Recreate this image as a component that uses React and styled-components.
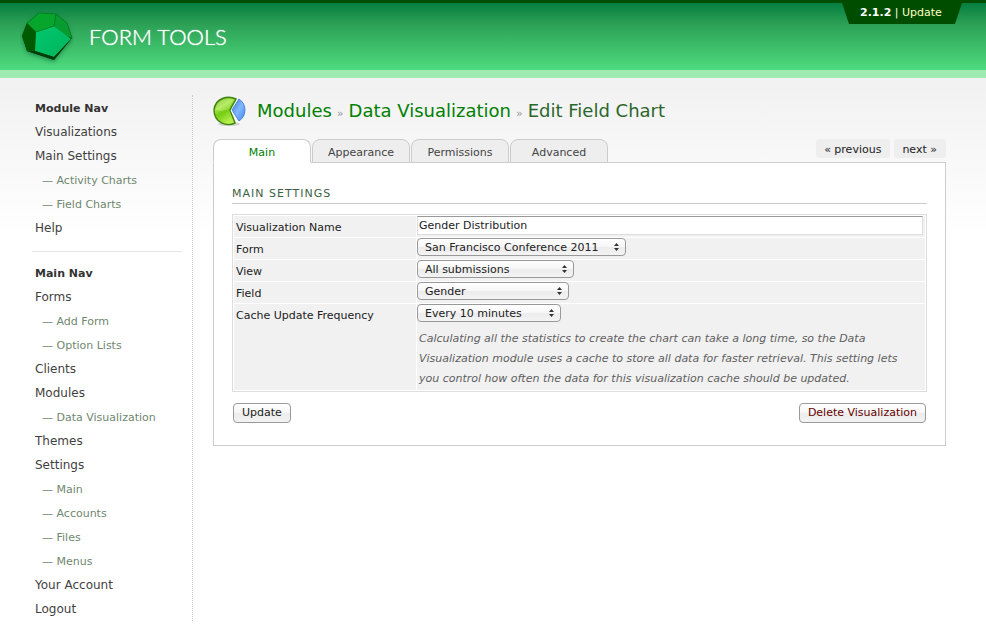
import React from "react";
import styled, { createGlobalStyle, css } from "styled-components";

const GlobalStyle = createGlobalStyle`
  *, *::before, *::after { box-sizing: border-box; }
  body {
    margin: 0;
    background: #fff;
    color: #222;
    font-family: Verdana, "DejaVu Sans", sans-serif;
    font-size: 11px;
    line-height: 20px;
  }
  a { color: inherit; text-decoration: none; }
  button, input, select { font: inherit; color: inherit; margin: 0; }
`;

const Page = styled.div`
  background: linear-gradient(#f1f1f1, #fff 160px) 0 78px no-repeat;
`;

const Header = styled.header`
  display: flex;
  justify-content: space-between;
  align-items: flex-start;
  height: 78px;
  padding: 0 24px 0 20px;
  border-top: 3px solid #004d00;
  border-bottom: 8px solid #9debb0;
  background: linear-gradient(#057e40, #2b9f54 30%, #4edb7e);
  background-clip: padding-box;
`;

const Brand = styled.a`
  display: flex;
  align-items: center;
  gap: 15px;
  padding-top: 6px;
  color: #fff;
  font: 300 22px/30px Lato, sans-serif;
  text-shadow: 0 0 1px #fff;
`;

const Version = styled.div`
  width: 120px;
  height: 21px;
  padding-left: 18px;
  background: #004d00;
  clip-path: polygon(0 0, 100% 0, calc(100% - 7px) 100%, 7px 100%);
  color: #fff;
  line-height: 20px;
  white-space: nowrap;

  a { color: #ffffc0; }
`;

const Body = styled.div`
  display: flex;
  align-items: flex-start;
  gap: 20px;
  padding: 17px 40px 19px 32px;
`;

const Sidebar = styled.nav`
  flex: 0 0 161px;
  padding: 1px 10px 0 0;
  border-right: 1px dotted #ccc;
`;

const NavGroup = styled.section`
  & + & {
    margin-top: 11px;
    padding-top: 9px;
    border-top: 1px solid #e6e6e6;
  }
`;

const NavTitle = styled.h2`
  margin: 0;
  padding: 2px 0 0 3px;
  color: #333;
  font-size: 11px;
  font-weight: bold;
  line-height: 22px;
`;

const NavList = styled.ul`
  margin: 0;
  padding: 0;
  list-style: none;
`;

const NavItem = styled.li`
  padding-left: 3px;
  color: #3f3f3f;
  font-size: 12px;
  line-height: 24px;
  white-space: nowrap;

  ${(p) =>
    p.$sub &&
    css`
      padding: 2px 0 0 10px;
      color: #6f876f;
      font-size: 11px;
      line-height: 22px;
    `}
`;

const Content = styled.main`
  flex: 1;
  min-width: 0;
`;

const TitleRow = styled.div`
  display: flex;
  align-items: center;
  gap: 10px;
  height: 32px;
`;

const Title = styled.h1`
  display: flex;
  align-items: baseline;
  gap: 5px;
  margin: 0;
  padding-top: 2px;
  color: #2b662b;
  font-size: 18px;
  font-weight: normal;
  line-height: 30px;
  white-space: nowrap;

  a { color: #008000; }
`;

const Joiner = styled.span`
  color: #999;
  font-size: 11px;
`;

const TabRow = styled.div`
  display: flex;
  justify-content: space-between;
  align-items: flex-start;
  margin-top: 12px;
`;

const Tabs = styled.div`
  display: flex;
  gap: 1px;
`;

const Tab = styled.a`
  position: relative;
  width: 98px;
  height: 24px;
  margin-bottom: -1px;
  border: 1px solid #ccc;
  border-radius: 8px 8px 0 0;
  background: #eee;
  color: #444;
  line-height: 26px;
  text-align: center;

  ${(p) =>
    p.$active &&
    css`
      border-bottom-color: #fff;
      background: #fff;
      color: #008000;
    `}
`;

const Pager = styled.div`
  display: flex;
  gap: 4px;
`;

const PagerLink = styled.a`
  height: 19px;
  padding: 0 9px 0 8px;
  border-radius: 3px;
  background: #eee;
  line-height: 21px;
`;

const Panel = styled.section`
  padding: 22px 18px;
  border: 1px solid #ccc;
  background: #fff;
`;

const SectionTitle = styled.h2`
  margin: 0 0 10px;
  border-bottom: 1px solid #ccc;
  color: #3f5f45;
  font-size: 11px;
  font-weight: normal;
  letter-spacing: 1px;
  line-height: 18px;
  text-transform: uppercase;
`;

const Settings = styled.table`
  width: 100%;
  border: 1px solid #ddd;
  border-collapse: separate;
  border-spacing: 1px;
  table-layout: fixed;

  th, td {
    height: 21px;
    padding: 0;
    background: #f1f1f1;
    font-weight: normal;
    text-align: left;
    vertical-align: top;
  }
  th {
    width: 182px;
    padding: 2px 0 0 2px;
    line-height: 19px;
  }
`;

const TextInput = styled.input`
  display: block;
  width: calc(100% - 2px);
  height: 19px;
  padding: 1px 1px 0;
  border: 1px solid #ddd;
  border-top-color: #999;
  background: #fff;
`;

const SelectBox = styled.span`
  display: block;
  position: relative;
  width: ${(p) => p.$width}px;
  height: 19px;

  svg {
    position: absolute;
    top: 5px;
    right: 7px;
    pointer-events: none;
  }
`;

const buttonFace = css`
  border: 1px solid #999;
  border-radius: 4px;
  background: linear-gradient(#fff, #f6f6f6 50%, #ececec 51%, #f3f3f3);
`;

const Select = styled.select`
  ${buttonFace}
  display: block;
  width: 100%;
  height: 18px;
  padding: 1px 7px 0;
  appearance: none;
  line-height: 16px;
`;

const Hint = styled.p`
  margin: 0;
  padding: 6px 20px 1px 2px;
  color: #5f5f5f;
  font-style: italic;
`;

const Actions = styled.div`
  display: flex;
  justify-content: space-between;
  margin-top: 11px;
  padding: 0 1px;
`;

const Button = styled.button`
  ${buttonFace}
  height: 20px;
  padding: 0 8px;
  color: ${(p) => (p.$danger ? "#660000" : "#222")};
  line-height: 18px;
`;

const LogoMark = () => (
  <svg width="54" height="56" viewBox="0 0 54 56" aria-hidden="true">
    <defs>
      <filter id="shade" x="-20%" y="-20%" width="140%" height="150%">
        <feDropShadow dx="0" dy="2" stdDeviation="2" floodColor="#053" floodOpacity="0.5" />
      </filter>
      <linearGradient id="face" x1="0" y1="0" x2="1" y2="1">
        <stop offset="0" stopColor="#00c86c" />
        <stop offset="1" stopColor="#00b35c" />
      </linearGradient>
    </defs>
    <path d="M19 4 36 5 47 14 52 29 34 51 7 42 2 27 7 14Z" fill="#004a00" filter="url(#shade)" />
    <path d="M19 4 36 5 34 17 16 23 7 14Z" fill="#06a62c" />
    <path d="M36 5 47 14 52 29 46 27 34 17Z" fill="#079b30" />
    <path d="M7 14 16 23 15 42 7 42 2 27Z" fill="#005a00" />
    <path d="M16 23 34 17 51 30 34 48 15 42Z" fill="url(#face)" />
    <path d="M15 42 34 48 52 29 34 51 7 42Z" fill="#003d0a" />
    <path d="M19 4 36 5 34 17 16 23 7 14ZM36 5 47 14 52 29" fill="none" stroke="#067a24" strokeWidth="0.7" />
  </svg>
);

const PieIcon = () => (
  <svg width="34" height="30" viewBox="0 0 34 30" aria-hidden="true">
    <defs>
      <linearGradient id="green" x1="0" y1="0" x2="0.5" y2="1">
        <stop offset="0" stopColor="#5aa812" />
        <stop offset="0.4" stopColor="#a5e343" />
        <stop offset="0.6" stopColor="#72cc12" />
        <stop offset="1" stopColor="#b8ef4e" />
      </linearGradient>
      <linearGradient id="blue" x1="0" y1="0" x2="1" y2="1">
        <stop offset="0" stopColor="#2f78e4" />
        <stop offset="0.5" stopColor="#82b9ff" />
        <stop offset="1" stopColor="#3f86ea" />
      </linearGradient>
    </defs>
    <ellipse cx="16" cy="28" rx="11" ry="2" fill="#bbb" opacity="0.6" />
    <path d="M17 14 23 3C15-1 2 2 1 14 1 27 14 31 22 27Z" fill="url(#green)" stroke="#3d8510" strokeWidth="1.4" />
    <path d="M3 14C3 4 13 1 20 4L16 13 9 15Z" fill="#eaffc0" opacity="0.3" />
    <path d="M19 14 26 3C34 8 34 20 26 25Z" fill="url(#blue)" stroke="#3a75d0" strokeWidth="0.8" />
    <path d="M18 14 24 26" stroke="#fff" strokeWidth="1" />
  </svg>
);

const Arrows = () => (
  <svg width="5" height="8" viewBox="0 0 5 8" aria-hidden="true">
    <path d="M2.500 0 5 3H0ZM0 5H5L2.500 8Z" fill="#333" />
  </svg>
);

const navGroups = [
  {
    title: "Module Nav",
    items: [
      ["Visualizations"],
      ["Main Settings"],
      ["Activity Charts", true],
      ["Field Charts", true],
      ["Help"],
    ],
  },
  {
    title: "Main Nav",
    items: [
      ["Forms"],
      ["Add Form", true],
      ["Option Lists", true],
      ["Clients"],
      ["Modules"],
      ["Data Visualization", true],
      ["Themes"],
      ["Settings"],
      ["Main", true],
      ["Accounts", true],
      ["Files", true],
      ["Menus", true],
      ["Your Account"],
      ["Logout"],
    ],
  },
];

const tabs = ["Main", "Appearance", "Permissions", "Advanced"];

const selects = [
  { id: "form", label: "Form", value: "San Francisco Conference 2011", width: 209 },
  { id: "view", label: "View", value: "All submissions", width: 157 },
  { id: "field", label: "Field", value: "Gender", width: 152 },
  {
    id: "cache",
    label: "Cache Update Frequency",
    value: "Every 10 minutes",
    width: 144,
    hint: "Calculating all the statistics to create the chart can take a long time, so the Data Visualization module uses a cache to store all data for faster retrieval. This setting lets you control how often the data for this visualization cache should be updated.",
  },
];

export default function App() {
  return (
    <Page>
      <GlobalStyle />
      <Header>
        <Brand href="#">
          <LogoMark />
          FORM TOOLS
        </Brand>
        <Version>
          <b>2.1.2</b> | <a href="#update">Update</a>
        </Version>
      </Header>
      <Body>
        <Sidebar>
          {navGroups.map((group) => (
            <NavGroup key={group.title}>
              <NavTitle>{group.title}</NavTitle>
              <NavList>
                {group.items.map(([label, sub]) => (
                  <NavItem key={label} $sub={sub}>
                    {sub && "— "}
                    <a href="#nav">{label}</a>
                  </NavItem>
                ))}
              </NavList>
            </NavGroup>
          ))}
        </Sidebar>
        <Content>
          <TitleRow>
            <PieIcon />
            <Title>
              <a href="#modules">Modules</a>
              <Joiner>»</Joiner>
              <a href="#visualization">Data Visualization</a>
              <Joiner>»</Joiner>
              <span>Edit Field Chart</span>
            </Title>
          </TitleRow>
          <TabRow>
            <Tabs>
              {tabs.map((tab, i) => (
                <Tab key={tab} href="#tab" $active={i === 0}>
                  {tab}
                </Tab>
              ))}
            </Tabs>
            <Pager>
              <PagerLink href="#previous">« previous</PagerLink>
              <PagerLink href="#next">next »</PagerLink>
            </Pager>
          </TabRow>
          <Panel>
            <SectionTitle>Main Settings</SectionTitle>
            <Settings>
              <tbody>
                <tr>
                  <th scope="row">
                    <label htmlFor="name">Visualization Name</label>
                  </th>
                  <td>
                    <TextInput id="name" type="text" defaultValue="Gender Distribution" />
                  </td>
                </tr>
                {selects.map((row) => (
                  <tr key={row.id}>
                    <th scope="row">
                      <label htmlFor={row.id}>{row.label}</label>
                    </th>
                    <td>
                      <SelectBox $width={row.width}>
                        <Select id={row.id}>
                          <option>{row.value}</option>
                        </Select>
                        <Arrows />
                      </SelectBox>
                      {row.hint && <Hint>{row.hint}</Hint>}
                    </td>
                  </tr>
                ))}
              </tbody>
            </Settings>
            <Actions>
              <Button type="button">Update</Button>
              <Button type="button" $danger>
                Delete Visualization
              </Button>
            </Actions>
          </Panel>
        </Content>
      </Body>
    </Page>
  );
}
